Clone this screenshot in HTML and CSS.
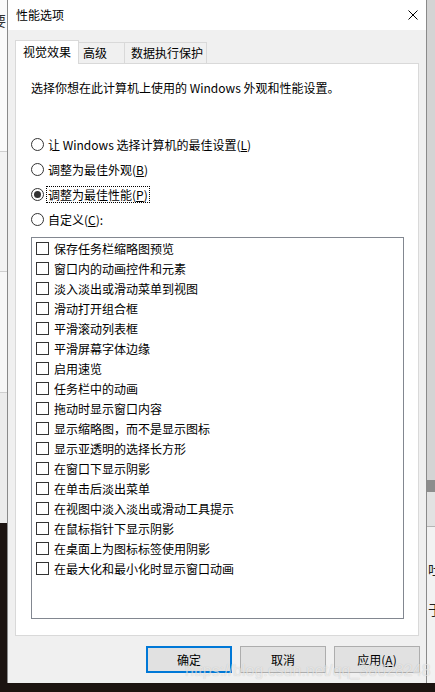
FILE: index.html
```html
<!DOCTYPE html>
<html lang="zh-CN">
<head>
  <meta charset="UTF-8" />
  <meta name="viewport" content="width=device-width, initial-scale=1.0" />
  <title>性能选项</title>
  <link rel="stylesheet" href="styles.css">
</head>
<body>
  <div class="left-strip">
    <div class="bg-part part-a"><span class="peek">要</span></div>
    <div class="bg-part part-b"></div>
    <div class="bg-part part-c"></div>
    <div class="bg-part part-d"></div>
  </div>

  <div class="dialog">
    <div class="titlebar">
      <span class="title">性能选项</span>
      <svg class="close" width="10" height="10" viewBox="0 0 10 10">
        <path d="M0.5 0.5L9.5 9.5M9.5 0.5L0.5 9.5" stroke="#000" stroke-width="1" fill="none"/>
      </svg>
    </div>

    <div class="dialog-body">
      <div class="tabs">
        <div class="tab active">视觉效果</div>
        <div class="tab tab-adv">高级</div>
        <div class="tab tab-dep">数据执行保护</div>
      </div>

      <div class="panel">
        <p class="desc">选择你想在此计算机上使用的 Windows 外观和性能设置。</p>

        <div class="radios">
          <div class="radio"><span class="dot"></span><span class="label">让 Windows 选择计算机的最佳设置(<u>L</u>)</span></div>
          <div class="radio"><span class="dot"></span><span class="label">调整为最佳外观(<u>B</u>)</span></div>
          <div class="radio"><span class="dot checked"></span><span class="label focus">调整为最佳性能(<u>P</u>)</span></div>
          <div class="radio"><span class="dot"></span><span class="label">自定义(<u>C</u>):</span></div>
        </div>

        <div class="listbox">
          <div class="item"><span class="box"></span>保存任务栏缩略图预览</div>
          <div class="item"><span class="box"></span>窗口内的动画控件和元素</div>
          <div class="item"><span class="box"></span>淡入淡出或滑动菜单到视图</div>
          <div class="item"><span class="box"></span>滑动打开组合框</div>
          <div class="item"><span class="box"></span>平滑滚动列表框</div>
          <div class="item"><span class="box"></span>平滑屏幕字体边缘</div>
          <div class="item"><span class="box"></span>启用速览</div>
          <div class="item"><span class="box"></span>任务栏中的动画</div>
          <div class="item"><span class="box"></span>拖动时显示窗口内容</div>
          <div class="item"><span class="box"></span>显示缩略图，而不是显示图标</div>
          <div class="item"><span class="box"></span>显示亚透明的选择长方形</div>
          <div class="item"><span class="box"></span>在窗口下显示阴影</div>
          <div class="item"><span class="box"></span>在单击后淡出菜单</div>
          <div class="item"><span class="box"></span>在视图中淡入淡出或滑动工具提示</div>
          <div class="item"><span class="box"></span>在鼠标指针下显示阴影</div>
          <div class="item"><span class="box"></span>在桌面上为图标标签使用阴影</div>
          <div class="item"><span class="box"></span>在最大化和最小化时显示窗口动画</div>
        </div>
      </div>

      <div class="buttons">
        <button class="btn default">确定</button>
        <button class="btn">取消</button>
        <button class="btn">应用(<u>A</u>)</button>
      </div>
    </div>
  </div>

  <div class="right-strip">
    <div class="rs-top"></div>
    <div class="rs-band"></div>
    <div class="rs-mid"></div>
    <div class="rs-low"><span class="peek-r">吐</span><span class="peek-r">于</span></div>
  </div>

  <div class="watermark">https://blog.csdn.net/qq_38028248</div>
</body>
</html>
```

FILE: styles.css
```css
body {
  margin: 0;
  width: 435px;
  height: 692px;
  overflow: hidden;
  position: relative;
  display: flex;
  align-items: flex-start;
  background-color: #1c1411;
  font-family: "Noto Sans CJK SC", "Noto Sans", sans-serif;
  font-size: 12px;
  color: #000;
}

/* background windows peeking out on both sides */
.left-strip {
  flex: none;
  width: 7px;
  height: 523px;
  display: flex;
  flex-direction: column;
  overflow: hidden;
}
.bg-part {
  background-color: #f3f3f3;
  border-bottom: 1px solid #cfcfcf;
}
.part-a {
  height: 151px;
  background-color: #fafafa;
}
.part-b {
  height: 119px;
}
.part-c {
  height: 120px;
  background-color: #f7f7f7;
}
.part-d {
  flex: 1;
  background-color: #ececec;
  border-bottom: none;
}
.peek {
  display: block;
  margin: 12px 0 0 -8px;
  font-size: 14px;
  line-height: 16px;
  color: #333;
}

.right-strip {
  flex: none;
  width: 8px;
  height: 683px;
  display: flex;
  flex-direction: column;
  overflow: hidden;
  box-shadow: inset 2px 0 2px rgba(0, 0, 0, 0.25);
}
.rs-top {
  height: 480px;
  background-color: #d4d4d4;
}
.rs-band {
  height: 12px;
  background-color: #8d8d8d;
}
.rs-mid {
  height: 34px;
  background-color: #e2e2e2;
  border-bottom: 1px solid #b5b5b5;
}
.rs-low {
  flex: 1;
  background-color: #f2f2f2;
  padding-top: 22px;
}
.peek-r {
  display: block;
  margin-left: 1px;
  font-size: 14px;
  line-height: 40px;
  color: #222;
}

/* dialog */
.dialog {
  flex: none;
  width: 420px;
  height: 683px;
  box-sizing: border-box;
  border-left: 1px solid #8a8a8a;
  border-right: 1px solid #8a8a8a;
  background-color: #f0f0f0;
  display: flex;
  flex-direction: column;
}
.titlebar {
  height: 30px;
  flex: none;
  background-color: #fff;
  display: flex;
  align-items: center;
  justify-content: space-between;
  padding: 0 8px;
}
.title {
  line-height: 16px;
}
.close {
  display: block;
}

.dialog-body {
  padding: 10px 7px 0 7px;
  display: flex;
  flex-direction: column;
}

.tabs {
  height: 23px;
  display: flex;
  align-items: flex-end;
}
.tab {
  height: 21px;
  box-sizing: border-box;
  border-top: 1px solid #d9d9d9;
  border-right: 1px solid #d9d9d9;
  background-color: #f0f0f0;
  line-height: 20px;
}
.tab.active {
  height: 24px;
  line-height: 22px;
  margin-bottom: -1px;
  border-left: 1px solid #d9d9d9;
  background-color: #fff;
  padding: 0 7px;
  position: relative;
  z-index: 1;
}
.tab-adv {
  padding: 0 17px 0 4px;
}
.tab-dep {
  padding: 0 3px 0 6px;
}

.panel {
  height: 573px;
  box-sizing: border-box;
  border: 1px solid #d9d9d9;
  background-color: #fff;
  padding-left: 15px;
  display: flex;
  flex-direction: column;
}
.desc {
  margin: 16px 0 0 0;
  line-height: 16px;
}

.radios {
  margin-top: 36px;
  display: flex;
  flex-direction: column;
}
.radio {
  height: 25px;
  display: flex;
  align-items: center;
}
.dot {
  width: 13px;
  height: 13px;
  box-sizing: border-box;
  border: 1px solid #333;
  border-radius: 50%;
  margin-right: 2px;
  display: flex;
  align-items: center;
  justify-content: center;
  flex: none;
}
.dot.checked::after {
  content: '';
  width: 7px;
  height: 7px;
  border-radius: 50%;
  background-color: #333;
}
.label {
  line-height: 15px;
  padding: 0 1px;
  border: 1px dotted transparent;
}
.label.focus {
  border-color: #000;
}

.listbox {
  margin-top: 5px;
  width: 373px;
  height: 382px;
  box-sizing: border-box;
  border: 1px solid #828790;
  padding-left: 4px;
}
.item {
  height: 20px;
  display: flex;
  align-items: center;
}
.box {
  width: 13px;
  height: 13px;
  box-sizing: border-box;
  border: 1px solid #333;
  margin-right: 5px;
  flex: none;
}

.buttons {
  margin: 10px -1px 0 0;
  display: flex;
  justify-content: flex-end;
  gap: 8px;
}
.btn {
  width: 86px;
  height: 27px;
  box-sizing: border-box;
  background-color: #e1e1e1;
  border: 1px solid #adadad;
  font-family: inherit;
  font-size: 12px;
  color: #000;
  padding: 0;
}
.btn.default {
  border: 2px solid #0078d7;
}

.watermark {
  position: absolute;
  left: 185px;
  top: 662px;
  font-family: "Liberation Sans", sans-serif;
  font-size: 16px;
  line-height: 18px;
  color: rgba(255, 255, 255, 0.6);
  text-shadow: 0 0 1px rgba(0, 0, 0, 0.2);
  white-space: nowrap;
}
```
